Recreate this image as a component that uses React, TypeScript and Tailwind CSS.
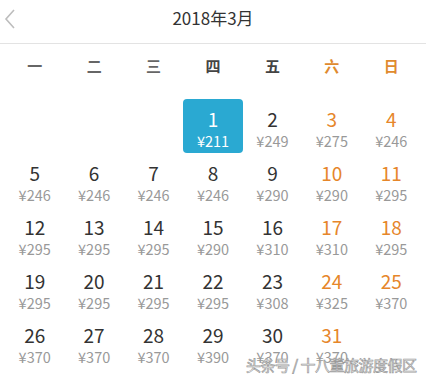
const weekdays = ["一", "二", "三", "四", "五", "六", "日"];

const prices: Record<number, number> = {
  1: 211, 2: 249, 3: 275, 4: 246,
  5: 246, 6: 246, 7: 246, 8: 246, 9: 290, 10: 290, 11: 295,
  12: 295, 13: 295, 14: 295, 15: 290, 16: 310, 17: 310, 18: 295,
  19: 295, 20: 295, 21: 295, 22: 295, 23: 308, 24: 325, 25: 370,
  26: 370, 27: 370, 28: 370, 29: 390, 30: 370, 31: 370,
};

// March 2018 starts on a Thursday
const offset = 3;

function DayCell({ day, col }: { day: number; col: number }) {
  const selected = day === 1;
  const weekend = col >= 5;
  return (
    <div
      className={
        "flex h-[54px] flex-col items-center rounded pt-[7px] " +
        (selected ? "bg-[#2aa9d2]" : "")
      }
    >
      <span
        className={
          "text-[19px] leading-[26px] " +
          (selected ? "text-white" : weekend ? "text-[#e6862a]" : "text-[#333]")
        }
      >
        {day}
      </span>
      <span
        className={
          "text-[14.5px] leading-[17px] " + (selected ? "text-white" : "text-[#999]")
        }
      >
        ¥{prices[day]}
      </span>
    </div>
  );
}

export default function App() {
  const cells: (number | null)[] = [];
  for (let i = 0; i < offset; i++) cells.push(null);
  for (let d = 1; d <= 31; d++) cells.push(d);

  return (
    <div className="relative h-[379px] w-[426px] overflow-hidden bg-white font-['Noto_Sans_CJK_SC',sans-serif]">
      <div className="relative flex h-[44px] items-center justify-center border-b border-[#e3e3e3] pb-[7px]">
        <svg className="absolute left-[4px] top-[9px]" width="12" height="20" viewBox="0 0 12 20">
          <path d="M10 1 L2 10 L10 19" fill="none" stroke="#bdbdbd" strokeWidth="1.6" />
        </svg>
        <span className="text-[17px] text-[#333]">2018年3月</span>
      </div>

      <div className="grid h-[44px] grid-cols-7 items-center px-[5px]">
        {weekdays.map((w, i) => (
          <span
            key={w}
            className={
              "text-center text-[15px] font-bold " +
              (i >= 5 ? "text-[#e08a2e]" : i < 3 ? "text-[#666]" : "text-[#444]")
            }
          >
            {w}
          </span>
        ))}
      </div>

      <div className="mt-[11px] grid grid-cols-7 px-[5px]">
        {cells.map((d, i) =>
          d === null ? <div key={"e" + i} /> : <DayCell key={d} day={d} col={i % 7} />
        )}
      </div>

      <div className="absolute left-[246px] top-[354px] whitespace-nowrap text-[15px] tracking-[-0.5px] text-white/80 [-webkit-text-stroke:0.7px_#9a9a9a]">
        头条号 / 十八董旅游度假区
      </div>
    </div>
  );
}
